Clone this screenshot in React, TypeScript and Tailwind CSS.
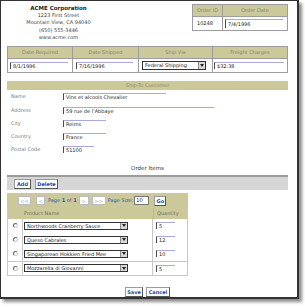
import React from 'react'

const ROWS = [
  { product: 'Northwoods Cranberry Sauce', qty: '5' },
  { product: 'Queso Cabrales', qty: '12' },
  { product: 'Singaporean Hokkien Fried Mee', qty: '10' },
  { product: 'Mozzarella di Giovanni', qty: '5' },
]

const CUSTOMER = [
  { label: 'Name', value: 'Vins et alcools Chevalier', w: 'w-[103px]' },
  { label: 'Address', value: '59 rue de l\u2019Abbaye', w: 'w-[151px]' },
  { label: 'City', value: 'Reims', w: 'w-[43px]' },
  { label: 'Country', value: 'France', w: 'w-[43px]' },
  { label: 'Postal Code', value: '51100', w: 'w-[31px]' },
]

function Field({ value, className }: { value: string; className: string }) {
  return (
    <div
      className={`${className} flex items-center border-l border-t border-l-[#4a4a4a] border-t-[#a9a9dc] bg-white pl-[2px] text-[5px] leading-[6px] text-[#222] whitespace-nowrap overflow-hidden`}
    >
      {value}
    </div>
  )
}

function Select({ value, className }: { value: string; className: string }) {
  return (
    <div className={`${className} flex items-stretch border border-[#333] bg-white`}>
      <span className="flex-1 pl-[2px] text-[5px] leading-[7px] text-[#222] whitespace-nowrap overflow-hidden">
        {value}
      </span>
      <span className="flex w-[7px] items-center justify-center border-l border-[#888] bg-[#d8d8d8]">
        <svg width="4" height="3" viewBox="0 0 4 3">
          <path d="M0 0h4L2 3z" fill="#222" />
        </svg>
      </span>
    </div>
  )
}

function Btn({ children, className }: { children: React.ReactNode; className: string }) {
  return (
    <span
      className={`${className} flex items-center justify-center border border-[#9a9a9a] border-r-[#555] border-b-[#555] bg-white text-[5px] font-bold leading-[6px] text-[#2548a8]`}
    >
      {children}
    </span>
  )
}

function PagerBtn({ children, className }: { children: React.ReactNode; className: string }) {
  return (
    <span
      className={`${className} flex h-[9px] items-center justify-center border border-[#bbb] bg-white text-[5px] leading-[6px] text-[#b5b5b5]`}
    >
      {children}
    </span>
  )
}

export default function App() {
  return (
    <div className="h-[307px] w-[305px] bg-white font-['DejaVu_Sans',Verdana,sans-serif] text-[5px] leading-[7px] text-[#333]">
      <div className="flex h-[299px] w-[299px] flex-col border-b-2 border-l border-r-2 border-t border-[#333] pl-[6px] pr-[9px] shadow-[3px_3px_3px_rgba(0,0,0,0.45)]">
        {/* Company + order id */}
        <div className="flex h-[46px] pt-[3px]">
          <div className="w-[103px] pt-[0.5px] text-center leading-[7.4px] text-[#444]">
            <div className="text-[5.5px] font-bold text-[#222]">ACME Corporation</div>
            <div>1223 First Street</div>
            <div>Mountain View, CA 94040</div>
            <div>(650) 555-3446</div>
            <div>www.acme.com</div>
          </div>
          <div className="ml-auto h-[27px] w-[96px] border border-[#9d9d9d]">
            <div className="flex h-[11px] bg-[#cbc99a] text-[#86866c]">
              <span className="flex w-[30px] items-center justify-center border-r border-[#9d9d9d]">Order ID</span>
              <span className="flex flex-1 items-center justify-center">Order Date</span>
            </div>
            <div className="flex h-[14px] border-t border-[#9d9d9d]">
              <span className="flex w-[30px] items-center border-r border-[#9d9d9d] pl-[4px] text-[#222]">10248</span>
              <span className="flex flex-1 items-center pl-[2px]">
                <Field value="7/4/1996" className="h-[9px] w-[58px]" />
              </span>
            </div>
          </div>
        </div>

        {/* Dates / shipping */}
        <div className="border border-[#9d9d9d]">
          <div className="grid h-[11px] grid-cols-[65px_66px_74px_1fr] bg-[#cbc99a] text-[#86866c]">
            <span className="flex items-center justify-center border-r border-[#9d9d9d]">Date Required</span>
            <span className="flex items-center justify-center border-r border-[#9d9d9d]">Date Shipped</span>
            <span className="flex items-center justify-center border-r border-[#9d9d9d]">Ship Via</span>
            <span className="flex items-center justify-center">Freight Charges</span>
          </div>
          <div className="grid h-[14px] grid-cols-[65px_66px_74px_1fr] border-t border-[#9d9d9d]">
            <span className="flex items-center border-r border-[#9d9d9d] pl-[2px]">
              <Field value="8/1/1996" className="h-[7px] w-[58px]" />
            </span>
            <span className="flex items-center border-r border-[#9d9d9d] pl-[3px]">
              <Field value="7/16/1996" className="h-[7px] w-[57px]" />
            </span>
            <span className="flex items-center border-r border-[#9d9d9d] pl-[3px]">
              <Select value="Federal Shipping" className="h-[9px] w-[64px]" />
            </span>
            <span className="flex items-center pl-[1px]">
              <Field value="$32.38" className="h-[7px] w-[70px]" />
            </span>
          </div>
        </div>

        {/* Ship-to customer */}
        <div className="mt-[8px] flex h-[9px] items-center justify-center bg-[#cbc99a] text-[#8d8d72]">
          Ship-To Customer
        </div>
        {CUSTOMER.map((c) => (
          <div key={c.label} className="flex h-[13.3px] items-center">
            <span className="w-[56px] pl-[4px] text-[#7a7a7a]">{c.label}</span>
            <Field value={c.value} className={`${c.w} h-[7px]`} />
          </div>
        ))}

        {/* Order items */}
        <div className="mt-[8.5px] h-[8px] text-center text-[5.5px] leading-[8px] text-[#333]">Order Items</div>
        <div className="mt-[3px] flex h-[15px] items-center gap-[4px] border-t-2 border-[#9b9b9b] bg-[#d6d6d6] pl-[7px]">
          <Btn className="h-[10px] w-[17px]">Add</Btn>
          <Btn className="h-[10px] w-[23px]">Delete</Btn>
        </div>

        <div className="mt-[3px] flex h-[15px] w-[181px] items-center bg-[#cbc99a] pl-[11px] text-[#2b55b0]">
          <PagerBtn className="w-[13px]">&lt;&lt;</PagerBtn>
          <PagerBtn className="ml-[5px] w-[9px]">&lt;</PagerBtn>
          <span className="ml-[3px] whitespace-nowrap">
            Page <b>1</b> of <b>1</b>
          </span>
          <PagerBtn className="ml-[2px] w-[10px]">&gt;</PagerBtn>
          <PagerBtn className="ml-[3px] w-[14px]">&gt;&gt;</PagerBtn>
          <span className="ml-[2px] whitespace-nowrap">Page Size:</span>
          <span className="ml-[1px] flex h-[9px] w-[15px] items-center border border-[#777] bg-white pl-[1px] text-[#222]">10</span>
          <Btn className="ml-[5px] h-[10px] w-[12px]">Go</Btn>
        </div>
        <div className="grid h-[11px] w-[181px] grid-cols-[15px_130px_1fr] border-x border-[#c8c8c8] bg-[#cbc99a] text-[#6f6f5c]">
          <span />
          <span className="flex items-center pl-[1px]">Product Name</span>
          <span className="flex items-center border-l border-[#b9b88c] pl-[3px]">Quantity</span>
        </div>
        <div className="w-[181px] border-x border-b border-[#c8c8c8]">
          {ROWS.map((r, i) => (
            <div
              key={r.product}
              className={`grid h-[14px] grid-cols-[15px_130px_1fr] ${i === 3 ? 'border-t border-[#c8c8c8]' : ''}`}
            >
              <span className="flex items-center justify-center border-r border-[#c8c8c8]">
                <span className="h-[5px] w-[5px] rounded-full border border-[#666] border-b-[#ccc] border-r-[#ccc] bg-white" />
              </span>
              <span className="flex items-center border-r border-[#c8c8c8] pl-[1px]">
                <Select value={r.product} className="h-[8px] w-[104px]" />
              </span>
              <span className="flex items-center pl-[3px]">
                <Field value={r.qty} className="h-[7px] w-[19px]" />
              </span>
            </div>
          ))}
        </div>

        <div className="mt-[11px] flex justify-center gap-[3px]">
          <Btn className="h-[10px] w-[18px]">Save</Btn>
          <Btn className="h-[10px] w-[24px]">Cancel</Btn>
        </div>
      </div>
    </div>
  )
}
